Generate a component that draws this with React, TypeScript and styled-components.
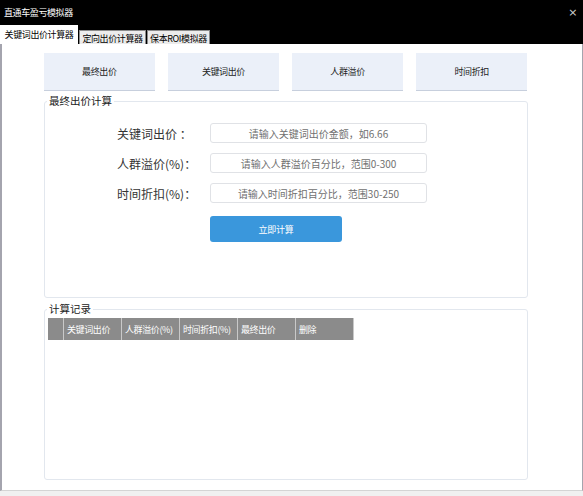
import React from "react";
import styled, { createGlobalStyle } from "styled-components";

const GlobalStyle = createGlobalStyle`
  html, body { margin: 0; padding: 0; background: #f0f0f0; }
  body { font-family: "Noto Sans CJK SC", "Noto Sans", sans-serif; }
  * { box-sizing: border-box; }
`;

const Window = styled.div`
  width: 583px;
  height: 496px;
  display: flex;
  flex-direction: column;
  background: #f0f0f0;
`;

const TitleBar = styled.div`
  height: 25px;
  background: #000;
  color: #fff;
  display: flex;
  align-items: center;
  justify-content: space-between;
  padding: 0 6px 0 4px;
  font-size: 9px;
  letter-spacing: -0.4px;
`;

const Close = styled.span`
  color: #d0d0d0;
  font-family: "DejaVu Sans", sans-serif;
  font-size: 11px;
  line-height: 1;
`;

const TabStrip = styled.div`
  height: 19px;
  background: #000;
  display: flex;
  align-items: flex-end;
  gap: 1px;
`;

const Tab = styled.div<{ $active?: boolean; $w: number }>`
  height: ${(p) => (p.$active ? 19 : 14)}px;
  width: ${(p) => p.$w}px;
  background: ${(p) => (p.$active ? "#fff" : "#ececec")};
  border: ${(p) => (p.$active ? "none" : "1px solid #8a8a8a")};
  border-bottom: none;
  color: #000;
  font-size: 9px;
  letter-spacing: -0.4px;
  display: flex;
  align-items: center;
  justify-content: center;
  padding-top: ${(p) => (p.$active ? 0 : 1)}px;
`;

const Content = styled.div`
  height: 447px;
  background: #fff;
  border-left: 2px solid #a4a4ae;
  border-right: 1px solid #a4a4ae;
  border-bottom: 1px solid #d4d4d4;
  padding: 9px 0 0 42px;
  display: flex;
  flex-direction: column;
`;

const ButtonRow = styled.div`
  display: flex;
  gap: 13.5px;
  width: 483px;
`;

const NavButton = styled.div`
  flex: 1;
  height: 38px;
  background: #ebf0f9;
  border-bottom: 1px solid #c7cfdd;
  display: flex;
  align-items: center;
  justify-content: center;
  font-size: 9px;
  letter-spacing: -0.4px;
  color: #222;
`;

const Group = styled.fieldset<{ $h: number; $mt: number }>`
  width: 484px;
  height: ${(p) => p.$h}px;
  margin: ${(p) => p.$mt}px 0 0 0;
  padding: 0;
  border: 1px solid #e2e7ee;
  border-radius: 3px;
  min-width: 0;
`;

const Legend = styled.legend`
  padding: 0 2px;
  margin-left: 2px;
  font-size: 10.5px;
  line-height: 12px;
  color: #222;
`;

const Form = styled.div`
  display: grid;
  grid-template-columns: 93px 217px;
  grid-auto-rows: 20px;
  row-gap: 10px;
  margin: 16px 0 0 72px;
`;

const Label = styled.div`
  font-size: 12px;
  color: #333;
  display: flex;
  align-items: center;
  white-space: pre;
`;

const Input = styled.input`
  height: 20px;
  border: 1px solid #e0e2e6;
  border-radius: 3px;
  text-align: center;
  font-family: "Noto Sans CJK SC", "Noto Sans", sans-serif;
  font-size: 10px;
  outline: none;
  padding: 0 4px;
  &::placeholder { color: #707070; }
`;

const Submit = styled.button`
  grid-column: 2;
  width: 132px;
  height: 26px;
  margin-top: 3px;
  background: #3a97dc;
  border: none;
  border-radius: 3px;
  color: #fff;
  font-family: "Noto Sans CJK SC", "Noto Sans", sans-serif;
  font-size: 9px;
  letter-spacing: -0.3px;
`;

const Table = styled.div`
  display: grid;
  grid-template-columns: 16px repeat(5, 58px);
  height: 22px;
  margin: 3px 0 0 3px;
  width: 306px;
`;

const HeadCell = styled.div`
  background: #8b8b8b;
  border-right: 1px solid #c9c9c9;
  color: #fff;
  font-size: 9px;
  letter-spacing: -0.4px;
  display: flex;
  align-items: center;
  padding-left: 3px;
  white-space: nowrap;
  overflow: hidden;
`;

const fields = [
  { label: "关键词出价 ：", ph: "请输入关键词出价金额，如6.66" },
  { label: "人群溢价(%)：", ph: "请输入人群溢价百分比，范围0-300" },
  { label: "时间折扣(%)：", ph: "请输入时间折扣百分比，范围30-250" },
];

const heads = ["", "关键词出价", "人群溢价(%)", "时间折扣(%)", "最终出价", "删除"];

export default function App() {
  return (
    <Window>
      <GlobalStyle />
      <TitleBar>
        <span>直通车盈亏模拟器</span>
        <Close>×</Close>
      </TitleBar>
      <TabStrip>
        <Tab $active $w={78}>关键词出价计算器</Tab>
        <Tab $w={67}>定向出价计算器</Tab>
        <Tab $w={63}>保本ROI模拟器</Tab>
      </TabStrip>
      <Content>
        <ButtonRow>
          <NavButton>最终出价</NavButton>
          <NavButton>关键词出价</NavButton>
          <NavButton>人群溢价</NavButton>
          <NavButton>时间折扣</NavButton>
        </ButtonRow>
        <Group $h={203} $mt={4}>
          <Legend>最终出价计算</Legend>
          <Form>
            {fields.map((f) => (
              <React.Fragment key={f.label}>
                <Label>{f.label}</Label>
                <Input placeholder={f.ph} />
              </React.Fragment>
            ))}
            <Submit>立即计算</Submit>
          </Form>
        </Group>
        <Group $h={177} $mt={5}>
          <Legend>计算记录</Legend>
          <Table>
            {heads.map((h, i) => (
              <HeadCell key={i}>{h}</HeadCell>
            ))}
          </Table>
        </Group>
      </Content>
    </Window>
  );
}
